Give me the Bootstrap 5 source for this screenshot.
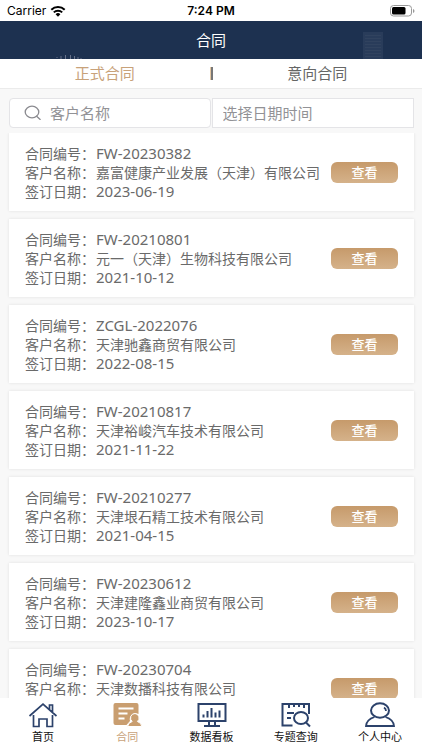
<!DOCTYPE html>
<html lang="zh-CN">
<head>
<meta charset="utf-8">
<meta name="viewport" content="width=device-width, initial-scale=1">
<title>合同</title>
<link href="https://cdn.jsdelivr.net/npm/bootstrap@5.3.0/dist/css/bootstrap.min.css" rel="stylesheet">
<style>
:root { --navy: #1d3150; --gold: #c8a27a; --ink: #6a6a6a; }
body { font-family: "Noto Sans", "Noto Sans CJK SC", sans-serif; background: #f8f8f8; color: var(--ink); font-size: 14px; }
.status { font-family: Inter, sans-serif; font-size: 12px; line-height: 21px; color: #000; padding: 0 7px; }
.status > * { flex: 1 1 0; }
.title-bar { background: var(--navy); color: #fff; height: 38px; }
.title-bar h1 { font-size: 15px; line-height: 38px; }
.skyline { right: 38px; bottom: 0; }
.rays { left: 56px; bottom: 0; }
.switch { height: 30px; border-bottom: 1px solid #ebebeb; font-size: 15px; line-height: 29px; }
.switch a { color: #666; }
.switch a.active { color: var(--gold); }
.switch .bar { width: 3px; height: 13px; background: #777; border-left: 1px solid #e3c7a3; }
.filters { padding: 9px 8px 5px 9px; }
.filters .form-control { font-size: 15px; height: 30px; line-height: 20px; color: var(--ink); border: 1px solid #e4e4e7; }
.filters .form-control::placeholder { color: #929296; }
.filters .search { padding: 0 8px 0 40px; border-radius: 4px; }
.filters .date { padding: 0 10px; border-radius: 0; }
.filters svg { left: 15px; top: 7px; }
.filters .search-box { padding-right: 1px; }
.records { padding: 0 8px 0 9px; gap: 8px; scrollbar-width: none; min-height: 0; }
.records::-webkit-scrollbar { display: none; }
.record { background: #fff; box-shadow: 0 0 3px rgba(0,0,0,.1); padding: 11px 16px 10px; line-height: 19px; }
.record dt { font-weight: 400; width: 71px; }
.record .num { font-size: 15px; }
.record .view { right: 16px; top: 29px; width: 67px; height: 21px; border: 0; border-radius: 6px; font-size: 13px; line-height: 21px; color: #fff; background: linear-gradient(#c69a6b, #d5b28a); font-weight: 500; }
.tabs { height: 52px; padding: 4px 0 0 1px; }
.tabs a { color: #111; font-size: 11px; line-height: 14px; font-weight: 400; gap: 2px; }
.tabs a.active { color: var(--gold); }
.tabs svg { width: 30px; height: 26px; fill: none; stroke: #2c426b; stroke-width: 2; }
</style>
</head>
<body>
<div class="d-flex flex-column vh-100 overflow-hidden">
  <div class="status bg-white d-flex align-items-center flex-shrink-0">
    <div class="d-flex align-items-center gap-1"><span>Carrier</span>
      <svg width="16" height="12" viewBox="0 0 16 12" fill="none" stroke="#000" stroke-width="2"><path d="M1.3 4.700a9.600 9.600 0 0 1 13.400 0M3.800 7.400a6 6 0 0 1 8.400 0"/><path d="M5.600 9.200a3.500 3.500 0 0 1 4.800 0L8 11.800z" fill="#000" stroke="none"/></svg>
    </div>
    <div class="text-center fw-semibold">7:24 PM</div>
    <div class="d-flex justify-content-end">
      <svg width="25" height="12" viewBox="0 0 25 12"><rect x=".5" y=".5" width="21" height="10.5" rx="3" fill="none" stroke="#999"/><rect x="2" y="2" width="13.5" height="7.5" rx="1.5"/><path d="M23 4v4q1.500-.6 1.500-2T23 4z" fill="#999"/></svg>
    </div>
  </div>

  <header class="title-bar position-relative flex-shrink-0 text-center">
    <h1 class="m-0 fw-normal">合同</h1>
    <svg class="rays position-absolute" width="26" height="4" viewBox="0 0 26 4" stroke="#66718a" stroke-width="1"><path d="M1 2v1M5 1v3M9.500 0v4M14.500 0v4M18.500 1v3M22 2v2M25 3v1"/></svg>
    <svg class="skyline position-absolute" width="22" height="27" viewBox="0 0 22 27"><path d="M1 0h20v27H1z" fill="#293c5a"/><path d="M3 3.500h16M3 6.500h16M3 9.500h16M3 12.500h16M3 15.500h16M3 18.500h16M3 21.500h16M3 24.500h16" stroke="#31435f"/></svg>
  </header>

  <nav class="switch bg-white d-flex align-items-center flex-shrink-0 text-center">
    <a href="#formal" class="active flex-fill w-50 text-decoration-none">正式合同</a>
    <span class="bar flex-shrink-0"></span>
    <a href="#intent" class="flex-fill w-50 text-decoration-none">意向合同</a>
  </nav>

  <form class="filters d-flex flex-shrink-0">
    <div class="search-box position-relative w-50">
      <svg class="position-absolute" width="18" height="16" viewBox="0 0 18 16" fill="none" stroke="#8b8b90" stroke-width="1.300"><ellipse cx="8" cy="7" rx="6.800" ry="5.800"/><path d="M12.600 11.200l3.600 3.200" stroke-linecap="round"/></svg>
      <input class="form-control search" type="text" placeholder="客户名称" aria-label="客户名称">
    </div>
    <div class="w-50"><input class="form-control date" type="text" placeholder="选择日期时间" aria-label="选择日期时间"></div>
  </form>

  <main class="records d-flex flex-column flex-fill overflow-auto">
    <article class="record position-relative flex-shrink-0">
      <dl class="m-0">
        <div class="d-flex"><dt>合同编号：</dt><dd class="num m-0">FW-20230382</dd></div>
        <div class="d-flex"><dt>客户名称：</dt><dd class="m-0">嘉富健康产业发展（天津）有限公司</dd></div>
        <div class="d-flex"><dt>签订日期：</dt><dd class="num m-0">2023-06-19</dd></div>
      </dl>
      <button type="button" class="view position-absolute p-0">查看</button>
    </article>
    <article class="record position-relative flex-shrink-0">
      <dl class="m-0">
        <div class="d-flex"><dt>合同编号：</dt><dd class="num m-0">FW-20210801</dd></div>
        <div class="d-flex"><dt>客户名称：</dt><dd class="m-0">元一（天津）生物科技有限公司</dd></div>
        <div class="d-flex"><dt>签订日期：</dt><dd class="num m-0">2021-10-12</dd></div>
      </dl>
      <button type="button" class="view position-absolute p-0">查看</button>
    </article>
    <article class="record position-relative flex-shrink-0">
      <dl class="m-0">
        <div class="d-flex"><dt>合同编号：</dt><dd class="num m-0">ZCGL-2022076</dd></div>
        <div class="d-flex"><dt>客户名称：</dt><dd class="m-0">天津驰鑫商贸有限公司</dd></div>
        <div class="d-flex"><dt>签订日期：</dt><dd class="num m-0">2022-08-15</dd></div>
      </dl>
      <button type="button" class="view position-absolute p-0">查看</button>
    </article>
    <article class="record position-relative flex-shrink-0">
      <dl class="m-0">
        <div class="d-flex"><dt>合同编号：</dt><dd class="num m-0">FW-20210817</dd></div>
        <div class="d-flex"><dt>客户名称：</dt><dd class="m-0">天津裕峻汽车技术有限公司</dd></div>
        <div class="d-flex"><dt>签订日期：</dt><dd class="num m-0">2021-11-22</dd></div>
      </dl>
      <button type="button" class="view position-absolute p-0">查看</button>
    </article>
    <article class="record position-relative flex-shrink-0">
      <dl class="m-0">
        <div class="d-flex"><dt>合同编号：</dt><dd class="num m-0">FW-20210277</dd></div>
        <div class="d-flex"><dt>客户名称：</dt><dd class="m-0">天津垠石精工技术有限公司</dd></div>
        <div class="d-flex"><dt>签订日期：</dt><dd class="num m-0">2021-04-15</dd></div>
      </dl>
      <button type="button" class="view position-absolute p-0">查看</button>
    </article>
    <article class="record position-relative flex-shrink-0">
      <dl class="m-0">
        <div class="d-flex"><dt>合同编号：</dt><dd class="num m-0">FW-20230612</dd></div>
        <div class="d-flex"><dt>客户名称：</dt><dd class="m-0">天津建隆鑫业商贸有限公司</dd></div>
        <div class="d-flex"><dt>签订日期：</dt><dd class="num m-0">2023-10-17</dd></div>
      </dl>
      <button type="button" class="view position-absolute p-0">查看</button>
    </article>
    <article class="record position-relative flex-shrink-0">
      <dl class="m-0">
        <div class="d-flex"><dt>合同编号：</dt><dd class="num m-0">FW-20230704</dd></div>
        <div class="d-flex"><dt>客户名称：</dt><dd class="m-0">天津数播科技有限公司</dd></div>
      </dl>
      <button type="button" class="view position-absolute p-0">查看</button>
    </article>
  </main>

  <nav class="tabs bg-white d-flex flex-shrink-0">
    <a href="#home" class="col d-flex flex-column align-items-center text-decoration-none">
      <svg viewBox="0 0 30 26"><path d="M1.500 14L15 2.200 28.500 14M21.500 7.500V3h3v7.500M5.500 13v11.500h5.500V17h8v7.500h5.500V13" stroke-width="1.700"/></svg>
      <span>首页</span></a>
    <a href="#contract" class="active col d-flex flex-column align-items-center text-decoration-none">
      <svg viewBox="0 0 30 26"><path d="M3.500 1h21q2 0 2 2v9a6 6 0 0 0-8.500 7l-3.500 4h-11q-2 0-2-2V3q0-2 2-2z" fill="#c99e70" stroke="none"/><path d="M6.500 6.500h15M6.500 11.500h9M6.500 16.500h6" stroke="#fff" stroke-width="1.800"/><path d="M23 11.500a4.500 4.500 0 0 1 2.400 8q4 1.200 4.400 5H15.600q.4-3.800 4.600-5A4.500 4.500 0 0 1 23 11.500z" fill="#c99e70" stroke="#fff" stroke-width="1"/></svg>
      <span>合同</span></a>
    <a href="#board" class="col d-flex flex-column align-items-center text-decoration-none">
      <svg viewBox="0 0 30 26"><path d="M1.500 2h27v17h-27zM12 19v4M18 19v4M7 24h16"/><path d="M6.500 15.500v-3M10.500 15.500V9M14.500 15.500V6M18.500 15.500v-5M22.500 15.500V8.500"/></svg>
      <span>数据看板</span></a>
    <a href="#query" class="col d-flex flex-column align-items-center text-decoration-none">
      <svg viewBox="0 0 30 26"><path d="M11.500 23.500h-10V2h26.500v10M8 2v4M13 2v3M18 2v3M23 2v4M6 11h7M6 16h4"/><ellipse cx="20" cy="16" rx="7" ry="6"/><path d="M25 20.500l4 4"/></svg>
      <span>专题查询</span></a>
    <a href="#me" class="col d-flex flex-column align-items-center text-decoration-none">
      <svg viewBox="0 0 30 26"><ellipse cx="15" cy="8.500" rx="9" ry="7.200"/><path d="M9.500 15Q1.500 17.500 1 24h28q-.5-6.500-8.500-9M19 5.500q2 1.200 2 3.500" stroke-width="1.800"/></svg>
      <span>个人中心</span></a>
  </nav>
</div>
<script src="https://cdn.jsdelivr.net/npm/bootstrap@5.3.0/dist/js/bootstrap.bundle.min.js"></script>
</body>
</html>
